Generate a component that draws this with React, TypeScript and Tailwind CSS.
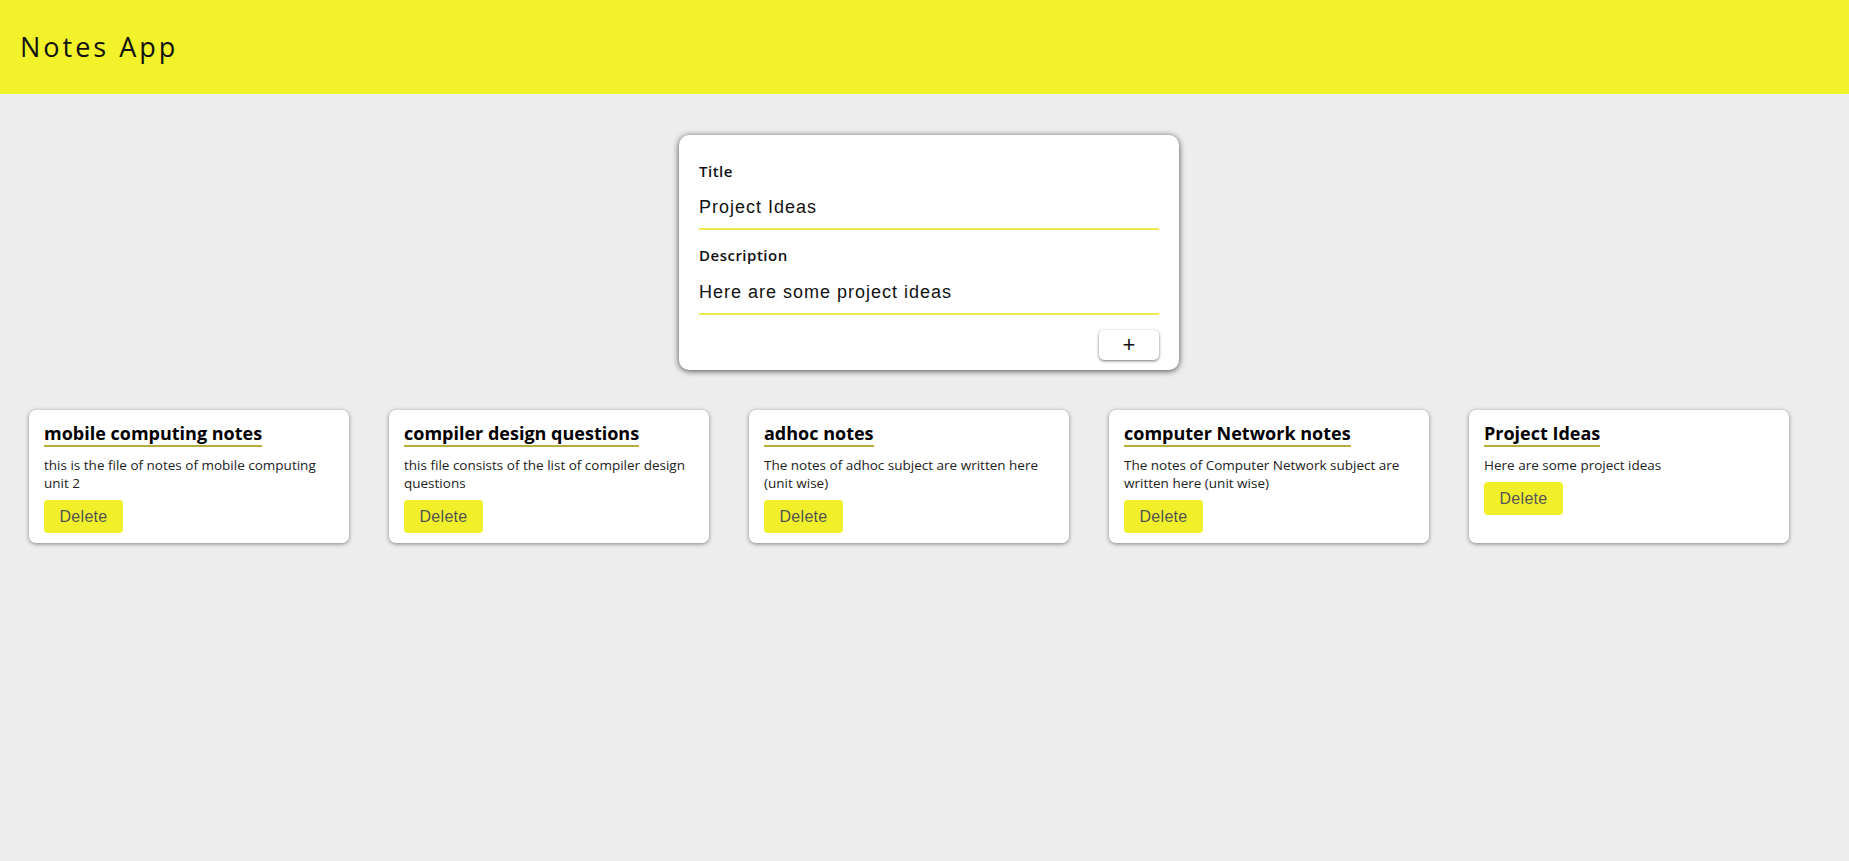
import { useState } from 'react';

interface Note {
  id: number;
  title: string;
  content: string;
}

const initialNotes: Note[] = [
  { id: 1, title: 'mobile computing notes', content: 'this is the file of notes of mobile computing unit 2' },
  { id: 2, title: 'compiler design questions', content: 'this file consists of the list of compiler design questions' },
  { id: 3, title: 'adhoc notes', content: 'The notes of adhoc subject are written here (unit wise)' },
  { id: 4, title: 'computer Network notes', content: 'The notes of Computer Network subject are written here (unit wise)' },
  { id: 5, title: 'Project Ideas', content: 'Here are some project ideas' },
];

function NoteCard({ note, onDelete }: { note: Note; onDelete: (id: number) => void }) {
  return (
    <div className="w-[320px] bg-white rounded-[7px] shadow-[0_1px_4px_rgba(0,0,0,0.45)] px-[15px] pt-[11px] pb-[10px] flex flex-col items-start font-['Open_Sans',sans-serif]">
      <h2 className="text-[18px] leading-[24px] font-bold text-black border-b-2 border-[#b9ac36]">
        {note.title}
      </h2>
      <p className="mt-[9px] text-[13.5px] leading-[18px] text-[#222]">{note.content}</p>
      <button
        onClick={() => onDelete(note.id)}
        className="mt-[8px] w-[79px] h-[33px] rounded-[4px] bg-[#f0ef2a] text-[#555] text-[16px] tracking-[0.3px] font-['Liberation_Sans',Arial,sans-serif] flex items-center justify-center"
      >
        Delete
      </button>
    </div>
  );
}

export default function App() {
  const [notes, setNotes] = useState<Note[]>(initialNotes);
  const [title, setTitle] = useState('Project Ideas');
  const [content, setContent] = useState('Here are some project ideas');

  const addNote = () => {
    if (!title.trim()) return;
    setNotes([...notes, { id: Date.now(), title, content }]);
    setTitle('');
    setContent('');
  };

  return (
    <div className="min-h-screen bg-[#ededed] font-['Open_Sans',sans-serif]">
      {/* Header */}
      <header className="h-[94px] bg-[#f1f22a] flex items-center px-[20px]">
        <h1 className="text-[27px] font-normal tracking-[3px] text-[#111]">Notes App</h1>
      </header>

      {/* Create form */}
      <div className="flex justify-center pl-[9px] pt-[41px]">
        <div className="w-[500px] bg-white rounded-[10px] shadow-[0_1px_6px_rgba(0,0,0,0.7)] px-[20px] pt-[26px] pb-[10px] flex flex-col">
          <label className="text-[15px] leading-[20px] font-semibold tracking-[0.5px] text-[#111]">Title</label>
          <input
            value={title}
            onChange={(e) => setTitle(e.target.value)}
            className="mt-[5px] h-[44px] border-b-2 border-[#f2e94e] outline-none text-[18px] tracking-[1px] text-[#111] font-['Liberation_Sans',Arial,sans-serif]"
          />
          <label className="mt-[15px] text-[15px] leading-[20px] font-semibold tracking-[0.5px] text-[#111]">Description</label>
          <input
            value={content}
            onChange={(e) => setContent(e.target.value)}
            className="mt-[6px] h-[44px] border-b-2 border-[#f2e94e] outline-none text-[18px] tracking-[1px] text-[#111] font-['Liberation_Sans',Arial,sans-serif]"
          />
          <div className="flex justify-end mt-[15px]">
            <button
              onClick={addNote}
              className="w-[60px] h-[30px] rounded-[5px] bg-white shadow-[0_1px_3px_rgba(0,0,0,0.55)] text-[22px] leading-none text-[#111] flex items-center justify-center font-['Liberation_Sans',Arial,sans-serif]"
            >
              +
            </button>
          </div>
        </div>
      </div>

      {/* Notes list */}
      <div className="flex flex-wrap gap-[40px] pl-[29px] pr-[20px] mt-[40px] pb-[40px]">
        {notes.map((n) => (
          <NoteCard key={n.id} note={n} onDelete={(id) => setNotes(notes.filter((x) => x.id !== id))} />
        ))}
      </div>
    </div>
  );
}
